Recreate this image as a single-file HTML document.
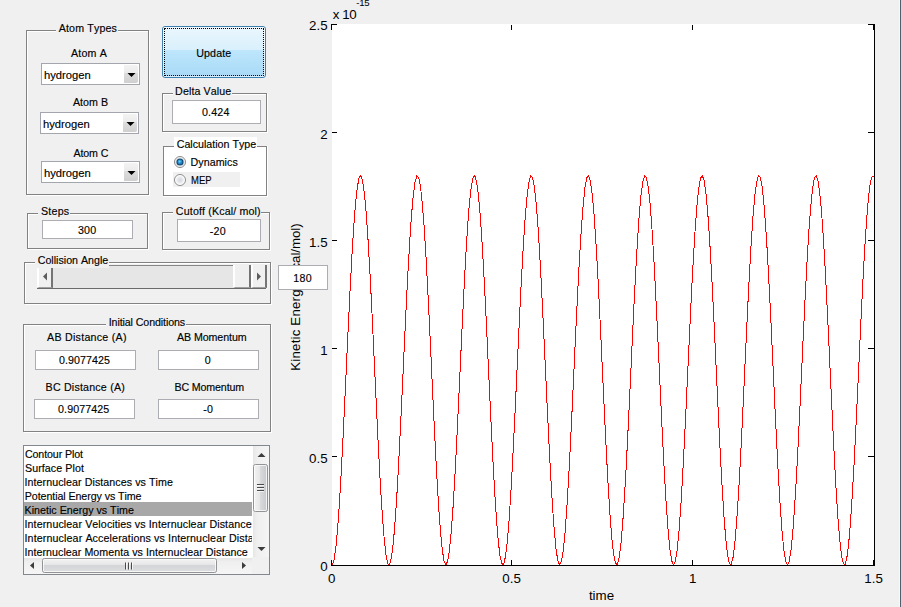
<!DOCTYPE html><html><head><meta charset="utf-8"><title>GUI</title><style>
html,body{margin:0;padding:0;}
body{width:901px;height:607px;background:#f0f0f0;position:relative;overflow:hidden;font-family:"Liberation Sans",sans-serif;color:#000;}
.t{position:absolute;line-height:14px;white-space:nowrap;color:#000;font-kerning:none;-webkit-text-stroke:0.15px #000;}
.pd{position:absolute;box-sizing:border-box;border:1px solid #828282;}
.pw{position:absolute;box-sizing:border-box;border:1px solid #fff;}
.ed{position:absolute;box-sizing:border-box;border:1px solid #abadb3;background:#fff;}
.pop{position:absolute;box-sizing:border-box;border:1px solid #a3a6ad;background:#fff;}
.pbtn{position:absolute;right:1px;top:1px;bottom:1px;width:14px;background:linear-gradient(#f3f3f3 0%,#ebebeb 45%,#dedede 45%,#cfcfcf 100%);border-radius:0 2px 2px 0;}
.parr{position:absolute;right:3px;top:9px;}
.btn{position:absolute;box-sizing:border-box;border:1px solid #3c7fb1;border-radius:3px;background:linear-gradient(#eaf6fd 0%,#d9f0fc 47%,#bee6fd 47%,#a7d9f5 100%);}
.btnin{position:absolute;left:0;top:0;right:0;bottom:0;border:1px solid rgba(255,255,255,.6);border-radius:2px;}
.focus{position:absolute;left:1px;top:1px;right:1px;bottom:1px;border:1px dotted #000;}
.sl{position:absolute;background:#e6e6e6;box-sizing:border-box;border-top:1px solid #868686;border-bottom:1px solid #6a6a6a;}
.slb{position:absolute;top:-1px;height:22px;background:#f0f0f0;box-sizing:content-box;border-right:2px solid #747474;border-left:2px solid #fff;border-bottom:1px solid #a0a0a0;}
.lb{position:absolute;box-sizing:border-box;border:1px solid #828790;background:#fff;overflow:hidden;}
.lbc{position:absolute;left:0;top:0;width:228px;height:112px;overflow:hidden;}
.li{position:absolute;left:0;width:228px;height:14px;}
.li span{position:absolute;top:1px;line-height:14px;font-size:10.67px;white-space:nowrap;font-kerning:none;-webkit-text-stroke:0.15px #000;}
.li.sel{background:#a8a8a8;}
.vs{position:absolute;left:228px;top:0;width:17px;height:112px;}
.hs{position:absolute;left:0;top:112px;width:228px;height:16px;}
</style></head><body>
<svg style="position:absolute;left:0;top:0" width="901" height="607" viewBox="0 0 901 607">
<rect x="332" y="24" width="543" height="542" fill="#fff"/>
<polyline points="332.00,565.00 333.81,561.14 335.61,549.72 337.42,531.18 339.23,506.27 341.03,475.96 342.84,441.47 344.65,404.15 346.45,365.49 348.26,327.02 350.07,290.26 351.87,256.67 353.68,227.58 355.49,204.15 357.29,187.29 359.10,177.69 360.91,175.71 362.71,181.45 364.52,194.66 366.33,214.83 368.13,241.17 369.94,272.61 371.75,307.93 373.55,345.71 375.36,384.47 377.17,422.66 378.97,458.78 380.78,491.38 382.59,519.19 384.39,541.09 386.20,556.23 388.01,563.99 389.81,564.08 391.62,556.48 393.43,541.50 395.23,519.74 397.04,492.05 398.85,459.54 400.65,423.49 402.46,385.33 404.27,346.56 406.07,308.74 407.88,273.36 409.69,241.81 411.49,215.35 413.30,195.03 415.11,181.66 416.91,175.76 418.72,177.56 420.53,187.00 422.33,203.70 424.14,227.00 425.95,255.97 427.75,289.48 429.56,326.18 431.37,364.63 433.17,403.31 434.98,440.67 436.79,475.24 438.59,505.65 440.40,530.70 442.21,549.38 444.01,560.97 445.82,565.00 447.63,561.31 449.43,550.05 451.24,531.66 453.05,506.88 454.85,476.68 456.66,442.27 458.47,405.00 460.27,366.35 462.08,327.86 463.89,291.05 465.69,257.37 467.50,228.17 469.31,204.60 471.11,187.59 472.92,177.82 474.73,175.67 476.53,181.24 478.34,194.29 480.15,214.32 481.95,240.52 483.76,271.87 485.57,307.11 487.37,344.86 489.18,383.61 490.99,421.83 492.79,458.01 494.60,490.71 496.41,518.63 498.21,540.68 500.02,555.97 501.83,563.90 503.63,564.16 505.44,556.73 507.25,541.91 509.05,520.29 510.86,492.72 512.67,460.30 514.47,424.31 516.28,386.18 518.09,347.42 519.89,309.56 521.70,274.10 523.51,242.46 525.31,215.88 527.12,195.41 528.93,181.88 530.73,175.80 532.54,177.44 534.35,186.71 536.15,203.25 537.96,226.42 539.77,255.28 541.57,288.70 543.38,325.35 545.19,363.77 546.99,402.46 548.80,439.87 550.61,474.52 552.41,505.03 554.22,530.21 556.03,549.04 557.83,560.79 559.64,564.99 561.45,561.47 563.25,550.38 565.06,532.14 566.87,507.49 568.67,477.40 570.48,443.07 572.29,405.85 574.09,367.21 575.90,328.70 577.71,291.83 579.51,258.07 581.32,228.76 583.13,205.05 584.93,187.89 586.74,177.95 588.55,175.64 590.35,181.03 592.16,193.92 593.97,213.80 595.77,239.88 597.58,271.13 599.39,306.30 601.19,344.01 603.00,382.75 604.81,421.00 606.61,457.24 608.42,490.03 610.23,518.08 612.03,540.26 613.84,555.71 615.65,563.81 617.45,564.24 619.26,556.98 621.07,542.32 622.87,520.84 624.68,493.39 626.49,461.07 628.29,425.14 630.10,387.04 631.91,348.27 633.71,310.38 635.52,274.85 637.33,243.11 639.13,216.40 640.94,195.79 642.75,182.10 644.55,175.85 646.36,177.32 648.17,186.42 649.97,202.81 651.78,225.84 653.59,254.59 655.39,287.92 657.20,324.51 659.01,362.92 660.81,401.61 662.62,439.06 664.43,473.79 666.23,504.41 668.04,529.71 669.85,548.70 671.65,560.61 673.46,564.98 675.27,561.64 677.07,550.70 678.88,532.62 680.69,508.10 682.49,478.12 684.30,443.86 686.11,406.69 687.91,368.07 689.72,329.54 691.53,292.62 693.33,258.78 695.14,229.35 696.95,205.51 698.75,188.19 700.56,178.09 702.37,175.60 704.17,180.83 705.98,193.56 707.79,213.29 709.59,239.25 711.40,270.39 713.21,305.49 715.01,343.15 716.82,381.89 718.63,420.17 720.43,456.47 722.24,489.35 724.05,517.51 725.85,539.84 727.66,555.44 729.47,563.71 731.27,564.31 733.08,557.22 734.89,542.72 736.69,521.38 738.50,494.06 740.31,461.83 742.11,425.96 743.92,387.90 745.73,349.13 747.53,311.19 749.34,275.60 751.15,243.76 752.95,216.93 754.76,196.18 756.57,182.32 758.37,175.91 760.18,177.20 761.99,186.14 763.79,202.38 765.60,225.26 767.41,253.90 769.21,287.14 771.02,323.68 772.83,362.06 774.63,400.76 776.44,438.26 778.25,473.06 780.05,503.79 781.86,529.22 783.67,548.35 785.47,560.43 787.28,564.97 789.09,561.79 790.89,551.02 792.70,533.09 794.51,508.71 796.31,478.84 798.12,444.66 799.93,407.53 801.73,368.93 803.54,330.38 805.35,293.41 807.15,259.48 808.96,229.95 810.77,205.97 812.57,188.50 814.38,178.23 816.19,175.57 817.99,180.63 819.80,193.20 821.61,212.79 823.41,238.61 825.22,269.65 827.03,304.68 828.83,342.30 830.64,381.04 832.45,419.34 834.25,455.70 836.06,488.67 837.87,516.95 839.67,539.42 841.48,555.18 843.29,563.61 845.09,564.38 846.90,557.46 848.71,543.11 850.51,521.92 852.32,494.72 854.13,462.58 855.93,426.79 857.74,388.75 859.55,349.98 861.35,312.01 863.16,276.36 864.97,244.42 866.77,217.46 868.58,196.56 870.39,182.55 872.19,175.97 874.00,177.09" fill="none" stroke="#f00" stroke-width="1" shape-rendering="crispEdges"/>
<g stroke="#000" stroke-width="1" shape-rendering="crispEdges" fill="none">
<path d="M331 565.5 H875"/>
<path d="M874.5 24 V566"/>
<path d="M331 565.5 h6"/>
<path d="M875 565.5 h-7"/>
<path d="M332 456.5 h5"/>
<path d="M875 456.5 h-7"/>
<path d="M332 348.5 h5"/>
<path d="M875 348.5 h-7"/>
<path d="M332 240.5 h5"/>
<path d="M875 240.5 h-7"/>
<path d="M332 132.5 h5"/>
<path d="M875 132.5 h-7"/>
<path d="M331 24.5 h6"/>
<path d="M875 24.5 h-7"/>
<path d="M331.5 566 v-6"/>
<path d="M331.5 24 v6"/>
<path d="M511.5 566 v-6"/>
<path d="M511.5 25 v5"/>
<path d="M692.5 566 v-6"/>
<path d="M692.5 25 v5"/>
<path d="M873.5 566 v-6"/>
<path d="M873.5 24 v6"/>
</g>
<g font-family="Liberation Sans, sans-serif" font-size="13.33" fill="#000">
<text x="327.6" y="571.4" text-anchor="end">0</text>
<text x="327.6" y="463.2" text-anchor="end">0.5</text>
<text x="327.6" y="355.0" text-anchor="end">1</text>
<text x="327.6" y="246.8" text-anchor="end">1.5</text>
<text x="327.6" y="138.6" text-anchor="end">2</text>
<text x="327.6" y="30.4" text-anchor="end">2.5</text>
<text x="331.6" y="583" text-anchor="middle">0</text>
<text x="511.6" y="583" text-anchor="middle">0.5</text>
<text x="692.6" y="583" text-anchor="middle">1</text>
<text x="873.6" y="583" text-anchor="middle">1.5</text>
<text x="601.5" y="600" text-anchor="middle">time</text>
<text x="332.75" y="18.9" letter-spacing="-0.408" style="font-kerning:none">x 10</text>
<text x="356.37" y="6" font-size="9.6" letter-spacing="-0.373" style="font-kerning:none">-15</text>
<text transform="translate(300,370.69) rotate(-90)" style="font-kerning:none"><tspan letter-spacing="0.164">Kinetic Energ</tspan><tspan letter-spacing="-0.996">y (K</tspan><tspan letter-spacing="-0.067">cal/mol)</tspan></text>
</g>
<rect x="899" y="0" width="1" height="607" fill="#f7f7f7"/><rect x="900" y="0" width="1" height="607" fill="#50606f"/>
</svg>
<div class="pw" style="left:27px;top:31px;width:123px;height:165px;"></div>
<div class="pd" style="left:26px;top:30px;width:123px;height:165px;"></div>
<div style="position:absolute;left:56px;top:28px;width:62px;height:5px;background:#f0f0f0"></div>
<div class="t" style="left:58.78px;top:21px;font-size:10.67px;letter-spacing:0.142px;">Atom Types</div>
<div class="t" style="left:71.08px;top:46px;font-size:10.67px;letter-spacing:0.151px;">Atom A</div>
<div class="pop" style="left:41px;top:63px;width:99px;height:22px;"><div class="pbtn"></div><svg class="parr" width="9" height="5" viewBox="0 0 9 5"><path d="M0.5 0H8.5L4.5 4Z" fill="#000"/></svg></div>
<div class="t" style="left:43.62px;top:68px;font-size:10.67px;transform:scaleX(1.0520);transform-origin:0 0;">hydrogen</div>
<div class="t" style="left:72.98px;top:95px;font-size:10.67px;letter-spacing:0.040px;">Atom B</div>
<div class="pop" style="left:40px;top:112px;width:99px;height:22px;"><div class="pbtn"></div><svg class="parr" width="9" height="5" viewBox="0 0 9 5"><path d="M0.5 0H8.5L4.5 4Z" fill="#000"/></svg></div>
<div class="t" style="left:42.62px;top:117px;font-size:10.67px;transform:scaleX(1.0520);transform-origin:0 0;">hydrogen</div>
<div class="t" style="left:73.48px;top:146px;font-size:10.67px;letter-spacing:-0.129px;">Atom C</div>
<div class="pop" style="left:41px;top:161px;width:99px;height:22px;"><div class="pbtn"></div><svg class="parr" width="9" height="5" viewBox="0 0 9 5"><path d="M0.5 0H8.5L4.5 4Z" fill="#000"/></svg></div>
<div class="t" style="left:43.62px;top:166px;font-size:10.67px;transform:scaleX(1.0520);transform-origin:0 0;">hydrogen</div>
<div class="btn" style="left:162px;top:26px;width:104px;height:52px;"><div class="btnin"></div><div class="focus"></div></div>
<div class="t" style="left:196.18px;top:46px;font-size:10.67px;letter-spacing:0.138px;">Update</div>
<div class="pw" style="left:163px;top:94px;width:105px;height:39px;"></div>
<div class="pd" style="left:162px;top:93px;width:105px;height:39px;"></div>
<div style="position:absolute;left:173px;top:91px;width:59px;height:5px;background:#f0f0f0"></div>
<div class="t" style="left:175.12px;top:84px;font-size:10.67px;letter-spacing:0.099px;">Delta Value</div>
<div class="ed" style="left:172px;top:100px;width:89px;height:24px;"></div>
<div class="t" style="left:201.98px;top:105px;font-size:10.67px;letter-spacing:0.182px;">0.424</div>
<div style="position:absolute;left:163px;top:146px;width:105px;height:51px;background:#fff"></div>
<div style="position:absolute;left:174px;top:137px;width:83px;height:13px;background:#fff"></div>
<div class="pw" style="left:164px;top:147px;width:104px;height:50px;"></div>
<div class="pd" style="left:163px;top:146px;width:104px;height:50px;background:#fff;"></div>
<div style="position:absolute;left:174px;top:144px;width:83px;height:5px;background:#fff"></div>
<div class="t" style="left:176.76px;top:137px;font-size:10.67px;letter-spacing:-0.004px;">Calculation Type</div>
<div style="position:absolute;left:173px;top:172px;width:67px;height:15px;background:#f0f0f0"></div>
<svg style="position:absolute;left:173px;top:155px" width="14" height="32" viewBox="0 0 14 32"><defs><radialGradient id="rb" cx="0.42" cy="0.4" r="0.6"><stop offset="0" stop-color="#7fd6f7"/><stop offset="0.45" stop-color="#2f9fdb"/><stop offset="1" stop-color="#1a6aa8"/></radialGradient><radialGradient id="ro" cx="0.5" cy="0.5" r="0.5"><stop offset="0" stop-color="#d4d8dd"/><stop offset="0.55" stop-color="#e4e7ea"/><stop offset="1" stop-color="#fbfbfb"/></radialGradient><linearGradient id="rr" x1="0" y1="0" x2="1" y2="1"><stop offset="0" stop-color="#9a9b9c"/><stop offset="1" stop-color="#7e7f80"/></linearGradient></defs><circle cx="7" cy="7" r="5.5" fill="#fdfdfd" stroke="#8a8b8c"/><circle cx="7" cy="7" r="4.3" fill="none" stroke="#d9dadb" stroke-width="0.8"/><circle cx="7" cy="7" r="3.6" fill="#17476f"/><circle cx="7" cy="7" r="2.5" fill="url(#rb)"/><circle cx="7" cy="25" r="5.5" fill="#fdfdfd" stroke="#8a8b8c"/><circle cx="7" cy="25" r="4.5" fill="url(#ro)"/></svg>
<div class="t" style="left:190.52px;top:155px;font-size:10.67px;letter-spacing:0.060px;">Dynamics</div>
<div class="t" style="left:190.82px;top:173px;font-size:10.67px;transform:scaleX(0.8901);transform-origin:0 0;">MEP</div>
<div class="pw" style="left:28px;top:214px;width:121px;height:36px;"></div>
<div class="pd" style="left:27px;top:213px;width:121px;height:36px;"></div>
<div style="position:absolute;left:38px;top:211px;width:32px;height:5px;background:#f0f0f0"></div>
<div class="t" style="left:40.92px;top:204px;font-size:10.67px;letter-spacing:0.246px;">Steps</div>
<div class="ed" style="left:42px;top:220px;width:91px;height:19px;"></div>
<div class="t" style="left:77.89px;top:223px;font-size:10.67px;letter-spacing:0.210px;">300</div>
<div class="pw" style="left:163px;top:213px;width:108px;height:38px;"></div>
<div class="pd" style="left:162px;top:212px;width:108px;height:38px;"></div>
<div style="position:absolute;left:173px;top:210px;width:88px;height:5px;background:#f0f0f0"></div>
<div class="t" style="left:175.86px;top:204px;font-size:10.67px;letter-spacing:0.146px;">Cutoff (Kcal/ mol)</div>
<div class="ed" style="left:177px;top:219px;width:84px;height:23px;"></div>
<div class="t" style="left:209.73px;top:224px;font-size:10.67px;letter-spacing:0.235px;">-20</div>
<div class="pw" style="left:25px;top:263px;width:247px;height:42px;"></div>
<div class="pd" style="left:24px;top:262px;width:247px;height:42px;"></div>
<div class="sl" style="left:37px;top:265px;width:229px;height:24px;"><div class="slb" style="left:0;width:12px"></div><div class="slb" style="left:196px;width:14px"></div><div class="slb" style="left:214px;width:12px"></div><svg style="position:absolute;left:0;top:0" width="230" height="24" viewBox="0 0 230 24"><path d="M6 10.5 L10 6.5 V14.5Z M220 6.5 L224 10.5 L220 14.5Z" fill="#5c5c5c"/></svg></div>
<div style="position:absolute;left:35px;top:255px;width:74px;height:13px;background:#f0f0f0"></div>
<div class="t" style="left:37.76px;top:253px;font-size:10.67px;letter-spacing:-0.005px;">Collision Angle</div>
<div class="pw" style="left:24px;top:325px;width:248px;height:108px;"></div>
<div class="pd" style="left:23px;top:324px;width:248px;height:108px;"></div>
<div style="position:absolute;left:106px;top:322px;width:80px;height:5px;background:#f0f0f0"></div>
<div class="t" style="left:108.72px;top:315px;font-size:10.67px;letter-spacing:-0.101px;">Initial Conditions</div>
<div class="t" style="left:47.08px;top:330px;font-size:10.67px;letter-spacing:0.256px;">AB Distance (A)</div>
<div class="t" style="left:177.08px;top:330px;font-size:10.67px;letter-spacing:-0.094px;">AB Momentum</div>
<div class="ed" style="left:35px;top:350px;width:101px;height:20px;"></div>
<div class="t" style="left:58.88px;top:353px;font-size:10.67px;letter-spacing:0.091px;">0.9077425</div>
<div class="ed" style="left:158px;top:350px;width:101px;height:20px;"></div>
<div class="t" style="left:204.78px;top:353px;font-size:10.67px;letter-spacing:0.000px;">0</div>
<div class="t" style="left:45.62px;top:380px;font-size:10.67px;letter-spacing:0.196px;">BC Distance (A)</div>
<div class="t" style="left:174.52px;top:380px;font-size:10.67px;letter-spacing:-0.147px;">BC Momentum</div>
<div class="ed" style="left:34px;top:399px;width:101px;height:20px;"></div>
<div class="t" style="left:58.08px;top:402px;font-size:10.67px;letter-spacing:0.091px;">0.9077425</div>
<div class="ed" style="left:158px;top:399px;width:101px;height:20px;"></div>
<div class="t" style="left:203.13px;top:402px;font-size:10.67px;letter-spacing:0.304px;">-0</div>
<div class="lb" style="left:23px;top:445px;width:247px;height:130px;">
<div class="lbc">
<div class="li" style="top:0px"><span style="left:0.96px;letter-spacing:-0.108px">Contour Plot</span></div>
<div class="li" style="top:14px"><span style="left:1.02px;letter-spacing:0.076px">Surface Plot</span></div>
<div class="li" style="top:28px"><span style="left:0.52px;letter-spacing:0.072px">Internuclear Distances vs Time</span></div>
<div class="li" style="top:42px"><span style="left:0.82px;letter-spacing:-0.076px">Potential Energy vs Time</span></div>
<div class="li sel" style="top:56px"><span style="left:0.62px;letter-spacing:0.012px">Kinetic Energy vs Time</span></div>
<div class="li" style="top:70px"><span style="left:0.52px;letter-spacing:0.106px">Internuclear Velocities vs Internuclear Distance</span></div>
<div class="li" style="top:84px"><span style="left:0.52px;letter-spacing:0.126px">Internuclear Accelerations vs Internuclear Distance</span></div>
<div class="li" style="top:98px"><span style="left:0.52px;letter-spacing:0.051px">Internuclear Momenta vs Internuclear Distance</span></div>
</div>
<div class="vs"><svg width="17" height="112" viewBox="0 0 17 112"><defs><linearGradient id="tg" x1="0" x2="1" y1="0" y2="0"><stop offset="0" stop-color="#f4f4f4"/><stop offset="0.45" stop-color="#e6e6e8"/><stop offset="0.5" stop-color="#d8d9db"/><stop offset="1" stop-color="#c6c7cb"/></linearGradient><linearGradient id="trk" x1="0" x2="1" y1="0" y2="0"><stop offset="0" stop-color="#e6e6e6"/><stop offset="0.25" stop-color="#efefef"/><stop offset="1" stop-color="#f5f5f5"/></linearGradient><linearGradient id="ag" x1="0" x2="0" y1="0" y2="1"><stop offset="0" stop-color="#2a2a2a"/><stop offset="1" stop-color="#6a6a6a"/></linearGradient></defs><rect x="1" y="0" width="16" height="111" fill="url(#trk)"/><path d="M5.5 11 L9.5 7 L13.5 11Z" fill="#3c3c3c"/><rect x="1.5" y="18.5" width="14" height="47" rx="2" fill="url(#tg)" stroke="#929394"/><rect x="2.5" y="19.5" width="12" height="45" rx="1" fill="none" stroke="#fff" stroke-opacity="0.75"/><path d="M5 38.5h7M5 41.5h7M5 44.5h7" stroke="#4a4a4a" stroke-width="1"/><path d="M5 39.5h7M5 42.5h7M5 45.5h7" stroke="#fff" stroke-width="1" stroke-opacity="0.7"/><path d="M5.5 101 H13.5 L9.5 105Z" fill="#3c3c3c"/></svg></div>
<div class="hs"><svg width="228" height="16" viewBox="0 0 228 16"><defs><linearGradient id="hg" x1="0" x2="0" y1="0" y2="1"><stop offset="0" stop-color="#f4f4f4"/><stop offset="0.45" stop-color="#e6e6e8"/><stop offset="0.5" stop-color="#d4d5d7"/><stop offset="1" stop-color="#dcdde0"/></linearGradient><linearGradient id="htrk" x1="0" x2="0" y1="0" y2="1"><stop offset="0" stop-color="#e6e6e6"/><stop offset="0.25" stop-color="#efefef"/><stop offset="1" stop-color="#f5f5f5"/></linearGradient></defs><rect x="0" y="0" width="228" height="16" fill="url(#htrk)"/><path d="M6 7.5 L10 4 V11Z" fill="#3c3c3c"/><rect x="18.5" y="0.5" width="174" height="14" rx="2" fill="url(#hg)" stroke="#929394"/><rect x="19.5" y="1.5" width="172" height="12" rx="1" fill="none" stroke="#fff" stroke-opacity="0.75"/><path d="M101.5 4.5v7M104.5 4.5v7M107.5 4.5v7" stroke="#4a4a4a" stroke-width="1"/><path d="M102.5 4.5v7M105.5 4.5v7M108.5 4.5v7" stroke="#fff" stroke-width="1" stroke-opacity="0.7"/><path d="M218 4 L222 7.5 L218 11Z" fill="#3c3c3c"/></svg></div>
<div style="position:absolute;left:228px;top:111px;width:17px;height:17px;background:#f0f0f0"></div>
</div>
<div class="ed" style="left:278px;top:265px;width:50px;height:25px;"></div>
<div class="t" style="left:293.19px;top:271px;font-size:10.67px;letter-spacing:0.364px;">180</div>
</body></html>
